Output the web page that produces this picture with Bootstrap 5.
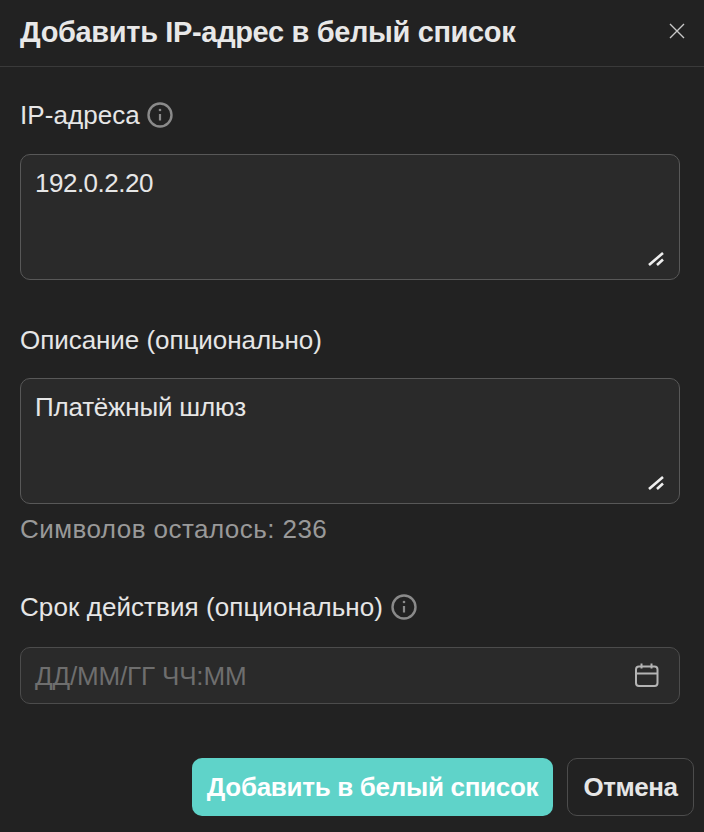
<!doctype html>
<html lang="ru"><head><meta charset="utf-8">
<link href="https://cdn.jsdelivr.net/npm/bootstrap@5.3.0/dist/css/bootstrap.min.css" rel="stylesheet">
<style>
html,body{height:100%;}
body{background:#222222;color:#e6e6e6;font-family:"Liberation Sans",Arial,sans-serif;font-size:26px;line-height:32px;overflow:hidden;}
.dlg-head{height:67px;padding:0 20px;border-bottom:1px solid #3a3a3a;}
.dlg-title{font-size:29px;font-weight:700;line-height:32px;color:#e8e8e8;margin:0 0 2px;letter-spacing:-.35px;}
.dlg-close{width:18px;height:18px;color:#c8c8c8;margin-right:-2px;margin-bottom:4px;}
.dlg-body{padding:32px 24px 0 20px;}
.fld-label{line-height:32px;color:#e6e6e6;margin:0 0 23px;letter-spacing:.07px;}
.fld-label-b{margin-bottom:22px;letter-spacing:-.05px;}
.fld-label-c{margin-bottom:24px;}
.fld-area{height:126px;background:#2a2a2a;border:1px solid #585858;border-radius:10px;padding:12px 14px;color:#e6e6e6;line-height:32px;letter-spacing:-.2px;}
.fld-area-ip{letter-spacing:-.5px;}
.fld-group-b{margin-top:44px;}
.fld-group-c{margin-top:46px;}
.fld-hint{color:#999;line-height:32px;margin-top:9px;letter-spacing:.45px;}
.grip{right:15px;bottom:13px;width:16px;height:14px;color:#eee;}
.fld-date{height:57px;background:#2a2a2a;border:1px solid #4c4c4c;border-radius:10px;padding:0 20px 0 14px;color:#6e6e6e;letter-spacing:-.15px;}
.info{width:26px;height:26px;color:#8a8a8a;}
.cal{width:24px;height:26px;color:#b4b4b4;}
.dlg-foot{padding:0 10px;margin-top:54px;gap:14px;}
.act-main{height:58px;width:361px;background:#5fd3c9;border:0;border-radius:10px;color:#fff;font-weight:700;font-size:26px;padding:0;letter-spacing:-.3px;}
.act-alt{height:58px;width:127px;background:transparent;border:1px solid #4c4c4c;border-radius:10px;color:#e6e6e6;font-weight:700;font-size:26px;padding:0;letter-spacing:-.5px;}
.gap-ip{gap:7px;}
.gap-term{gap:8px;}
</style></head><body>
<div class="dlg-head d-flex align-items-center justify-content-between">
<h1 class="dlg-title">Добавить IP-адрес в белый список</h1>
<svg class="dlg-close" viewBox="0 0 18 18" fill="none" stroke="currentColor" stroke-width="1.4"><path d="M2 2l14 14M16 2L2 16"/></svg>
</div>
<div class="dlg-body">
<div class="fld-label d-flex align-items-center gap-ip">IP-адреса
<svg class="info" viewBox="0 0 26 26" fill="none" stroke="currentColor"><circle cx="13" cy="13" r="11.5" stroke-width="2.4"/><path d="M13 12v6.500" stroke-width="2.2"/><circle cx="13" cy="8" r="1.3" fill="currentColor" stroke="none"/></svg></div>
<div class="fld-area fld-area-ip position-relative">192.0.2.20
<svg class="grip position-absolute" viewBox="0 0 16 14" fill="none" stroke="currentColor" stroke-width="2.6"><path d="M1 13L15 1M9 13l6-5.500"/></svg></div>
<div class="fld-group-b">
<div class="fld-label fld-label-b">Описание (опционально)</div>
<div class="fld-area position-relative">Платёжный шлюз
<svg class="grip position-absolute" viewBox="0 0 16 14" fill="none" stroke="currentColor" stroke-width="2.6"><path d="M1 13L15 1M9 13l6-5.500"/></svg></div>
<div class="fld-hint">Символов осталось: 236</div>
</div>
<div class="fld-group-c">
<div class="fld-label fld-label-c d-flex align-items-center gap-term">Срок действия (опционально)
<svg class="info" viewBox="0 0 26 26" fill="none" stroke="currentColor"><circle cx="13" cy="13" r="11.5" stroke-width="2.4"/><path d="M13 12v6.500" stroke-width="2.2"/><circle cx="13" cy="8" r="1.3" fill="currentColor" stroke="none"/></svg></div>
<div class="fld-date d-flex align-items-center justify-content-between">ДД/ММ/ГГ ЧЧ:ММ
<svg class="cal" viewBox="0 0 24 26" fill="none" stroke="currentColor" stroke-width="2"><rect x="1" y="3.500" width="21.500" height="19.500" rx="3"/><path d="M1 10.500h21.500M6.500 .5v5M16.500 .5v5"/></svg></div>
</div>
</div>
<div class="dlg-foot d-flex justify-content-end">
<button class="btn act-main">Добавить в белый список</button>
<button class="btn act-alt">Отмена</button>
</div>
<script src="https://cdn.jsdelivr.net/npm/bootstrap@5.3.0/dist/js/bootstrap.bundle.min.js"></script>
</body></html>
